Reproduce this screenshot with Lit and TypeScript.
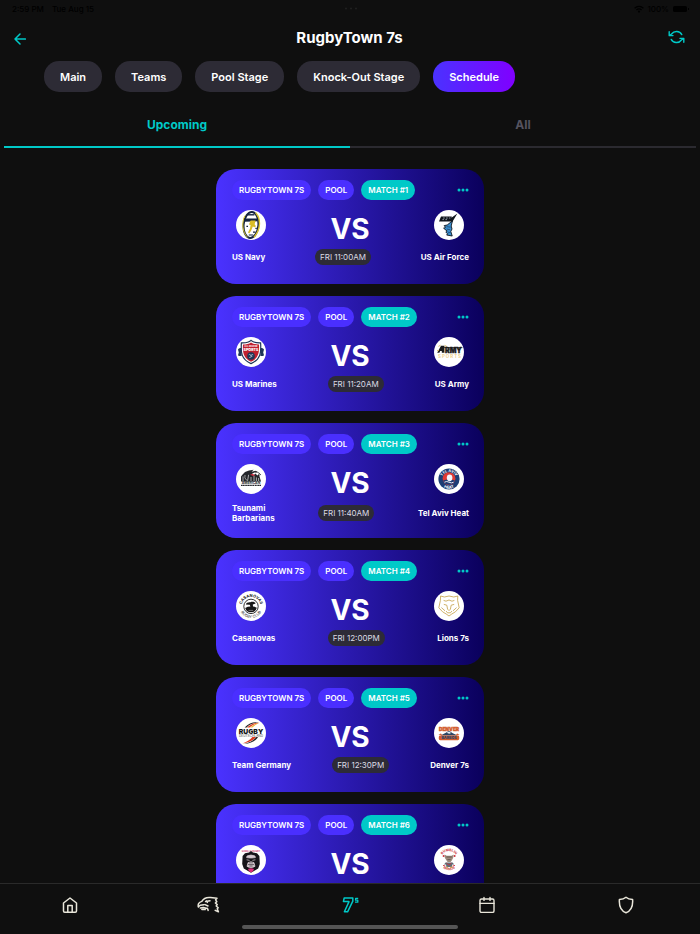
import { LitElement, html, css, svg } from "lit";
import type { TemplateResult } from "lit";
import { customElement, property, state } from "lit/decorators.js";
import { classMap } from "lit/directives/class-map.js";

interface Team {
  name: string[];
  logo: string;
}

interface Match {
  id: number;
  home: Team;
  away: Team;
  time: string;
}

const matches: Match[] = [
  { id: 1, home: { name: ["US Navy"], logo: "navy" }, away: { name: ["US Air Force"], logo: "airforce" }, time: "FRI 11:00AM" },
  { id: 2, home: { name: ["US Marines"], logo: "marines" }, away: { name: ["US Army"], logo: "army" }, time: "FRI 11:20AM" },
  { id: 3, home: { name: ["Tsunami", "Barbarians"], logo: "tsunami" }, away: { name: ["Tel Aviv Heat"], logo: "telaviv" }, time: "FRI 11:40AM" },
  { id: 4, home: { name: ["Casanovas"], logo: "casanovas" }, away: { name: ["Lions 7s"], logo: "lions" }, time: "FRI 12:00PM" },
  { id: 5, home: { name: ["Team Germany"], logo: "germany" }, away: { name: ["Denver 7s"], logo: "denver" }, time: "FRI 12:30PM" },
  { id: 6, home: { name: [], logo: "gorilla" }, away: { name: [], logo: "rhinos" }, time: "" },
];

/* Team crests, each drawn on a 30 x 30 white disc. */
const logos: Record<string, TemplateResult> = {
  navy: svg`
    <ellipse cx="15" cy="15" rx="7.4" ry="13" fill="none" stroke="#14233f" stroke-width="2" transform="rotate(5 15 15)"/>
    <path d="M19.600 2.800c5.200 5.600 5.600 16-1.600 24.400" fill="none" stroke="#d9c530" stroke-width="1.4"/>
    <path d="M11.600 27.400C6.200 22.400 5.400 12 9 5.600" fill="none" stroke="#d9c530" stroke-width="1"/>
    <path d="M8.400 8.600h13.800l-.8 2.600-5 .4-8 .2z" fill="#14233f"/>
    <path d="M11.400 4.800h7" stroke="#14233f" stroke-width="1.4"/>
    <path d="M14.600 10.600h5l-1 3.600 1.400 2-1.400 1-1.800-.8-1.600 4-2 3-1.200-.8 2-4 .6-3.600-1.600-.6z" fill="#d9bd28"/>
    <path d="M10.400 16.400h1.600M19.400 18.400h1.400M17 22.200h2.400M12.800 25h4.400" stroke="#14233f" stroke-width="1.200"/>`,
  airforce: svg`
    <path d="M7 6.400h10.800l-.4 1.400 6-4.400-5.400 9-1.800 1.600L17 11.400H5z" fill="#10151c"/>
    <path d="M9 8h1.800M12 8h1.800M15 8h1.400M8.400 9.600h1.600M11.400 9.600H13" stroke="#b9c3cd" stroke-width=".7"/>
    <path d="M16.200 12.600l2.200-1.600-1.200 5 .8 3-1.200 2.400 1.400 4.600-5.600-1 1.200-1.200-2-1.600 1.400-1-3.600-3 2-.8-1.400-1.800 3-.6z" fill="#3a8fd0" stroke="#10151c" stroke-width=".9"/>
    <path d="M12.600 16.600l4 .6M12.600 19l3.600.8M14 22.200l2.400.4" stroke="#16314f" stroke-width=".6"/>`,
  marines: svg`
    <path d="M2 12.400c.6-1 2-1.400 3.600-1.400v8c-1.600 0-3 0-3.600-.8l.8-2.800zM28 12.400c-.6-1-2-1.400-3.600-1.400v8c1.600 0 3 0 3.600-.8l-.8-2.800z" fill="#1d3557"/>
    <path d="M15 3.400c2 1.800 5.400 2.600 9.600 2.400.6 9.400.4 16.400-9.600 20.800C5 22.200 4.800 15.200 5.400 5.800 9.600 6 13 5.200 15 3.400z" fill="#fff" stroke="#1d3557" stroke-width="1.2"/>
    <path d="M15 5.400c2 1.400 4.600 2 8 2 .4 8-.2 13.600-8 17.400-7.800-3.800-8.400-9.400-8-17.400 3.400 0 6-.6 8-2z" fill="#c0202f"/>
    <text x="15" y="10.200" class="crest" font-size="2.200" fill="#fff">ALL MARINE</text>
    <text x="15" y="13.800" class="crest heavy" font-size="3.600" fill="#fff">SPORTS</text>
    <circle cx="15" cy="19" r="3.800" fill="#1d3557"/>
    <path d="M12.800 17.800c1-.8 2-.2 2.200 1 .4-1.400 1.400-1.600 2.200-1M13.400 20.600l3-1.400" stroke="#cfd6df" stroke-width=".8" fill="none"/>`,
  army: svg`
    <path d="M3.200 15.800L7 8.800h3.400v7H7.800V14H6.200l-.8 1.800z" fill="#1a1a1a"/>
    <path d="M4.400 9.400l2.200-1.200M10.600 8.400l2.400 1.200M3 13.600h2" stroke="#d9b75f" stroke-width=".9"/>
    <text x="19.400" y="15.800" class="crest heavy" font-size="7" fill="#1a1a1a" stroke="#1a1a1a" stroke-width=".4">RMY</text>
    <path d="M10 10.600h18.400" stroke="#1a1a1a" stroke-width=".8"/>
    <text x="15.500" y="21" class="crest" font-size="4.400" fill="#f0d28a">S P O R T S</text>`,
  tsunami: svg`
    <path d="M5 17.400v-5l1.600-1.800L9 8l4-1.600 4.600-.6-2 2 4-1 1.600 2-2.800-.4-2.600 1.600 1.600 1.400 2-2 2 2 1.400-1.400 2.200 7.400z" fill="#24262a"/>
    <path d="M7 12.400v4.600M9 11v3l2 2.600M12.600 10.800l-1 6M15 13v4M18 12v5M20.400 13.400v4M22.600 14v3.400" stroke="#fff" stroke-width=".6"/>
    <path d="M14 10.600l3-.6 2.400 1.600-3 .2z" fill="#d8283a"/>
    <path d="M20 7.200l4 2.600M22.400 11.400l2.600-1" stroke="#24262a" stroke-width=".8"/>
    <text x="15" y="20.200" class="crest" font-size="3.400" fill="#24262a">AMERICAN</text>
    <path d="M5 21.400h20" stroke="#24262a" stroke-width="1.300" stroke-dasharray="1.400 .3"/>`,
  telaviv: svg`
    <circle cx="15" cy="15" r="10.600" fill="#1c3d75"/>
    <circle cx="15" cy="14.600" r="6.400" fill="#e03a35"/>
    <path d="M9 16.600a6.400 6.400 0 0 0 12 0q-6-2-12 0z" fill="#1c3d75"/>
    <ellipse cx="15.600" cy="13.800" rx="2.800" ry="3.400" fill="#f2f5fb"/>
    <path d="M10.400 18.200q2.200-1.400 4.600 0t4.600 0" fill="none" stroke="#fff" stroke-width=".9"/>
    <path id="ta-top" d="M7.800 15a7.200 7.200 0 0 1 14.400 0" fill="none"/>
    <path id="ta-low" d="M5.400 17a9.800 9.800 0 0 0 19.200 0" fill="none"/>
    <text class="crest" font-size="3.700" fill="#fff"><textPath href="#ta-top" startOffset="50%">TEL AVIV</textPath></text>
    <text class="crest" font-size="4" fill="#fff"><textPath href="#ta-low" startOffset="50%">HEAT</textPath></text>`,
  casanovas: svg`
    <circle cx="15" cy="15.400" r="7.200" fill="#fff" stroke="#1b1b1b" stroke-width=".9"/>
    <path d="M9.800 13.600c.4-2 2.400-2.600 4.600-2.400 2-.8 4.800-.2 5.200 1.200l-2.800 1.200.2 2q2.800.2 3.800 1.200a6 6 0 0 1-11.600.2q2.600-1.400 5.200-1.400l-.6-1.800z" fill="#161616"/>
    <path d="M12.600 19.400h4.600" stroke="#999" stroke-width=".7"/>
    <path id="ca-top" d="M5.600 15.400a9.400 9.400 0 0 1 18.800 0" fill="none"/>
    <path id="ca-low" d="M3.400 15.400a11.600 11.600 0 0 0 23.200 0" fill="none"/>
    <text class="crest" font-size="4" fill="#1b1b1b"><textPath href="#ca-top" startOffset="50%">CASANOVAS</textPath></text>
    <text class="crest light" font-size="3.800" fill="#1b1b1b"><textPath href="#ca-low" startOffset="50%">RUGBY CLUB</textPath></text>`,
  lions: svg`
    <g fill="none" stroke="#c49f45" stroke-width=".8" stroke-linejoin="round">
      <path d="M6.600 5l3.800 1L15 5l4.800 1 4-1-.2 4.400 1.600 7.400-3.800 4-3.600 2.200-2.800 2-2.800-2-3.600-2.200-3.800-4 1.600-7.400z"/>
      <path d="M9.600 9.400l2.400.8 3-1.200 3 1.200 2.400-.8M9.800 13.400l3 .8.800 4L15 19.600l1.400-1.400.8-4 3-.8M12 20l1.600 1.800h2.800L18 20M7.400 16.600l3.600 3.200M22.600 16.600L19 19.800"/>
    </g>`,
  germany: svg`
    <path d="M8.600 9.400C12.600 5 18 3.600 22.600 4.400 17 5 13 6.600 10.600 9.400z" fill="#222"/>
    <path d="M11 9.400c4-3.400 8.400-4.800 12.400-4.600-4.400 1.200-8 2.800-9.800 4.800z" fill="#df3b20"/>
    <path d="M14 9.400c3-2.400 5.800-4 9-4.400-3 1.600-5.200 3-6.600 4.600z" fill="#efb43c"/>
    <path d="M6.400 25.400c5.400-.4 10.600-2.800 13.800-6.400h-3.800C14.200 22 10.600 24.200 6.400 25.400z" fill="#df3b20"/>
    <path d="M8 25.800c6 .2 11.600-2.600 14-6.800h-1.600c-3.400 3.800-7.600 6-12.400 6.800z" fill="#222"/>
    <text x="15" y="16" class="crest heavy" font-size="6.800" fill="#151515">RUGBY</text>
    <text x="15" y="19.400" class="crest light" font-size="3.200" fill="#444">DEUTSCHLAND</text>`,
  denver: svg`
    <text x="15" y="12.600" class="crest heavy" font-size="4.800" fill="#d25b2c" stroke="#d25b2c" stroke-width=".4">DENVER</text>
    <path d="M6.400 17.600l5-2.600 3.600-2.200 3.800 2.400 4.800 2.400z" fill="#2d4563"/>
    <path d="M12.600 14.800l2.400-1.400 2.200 1.600-2 .8z" fill="#e9eef5"/>
    <path d="M7 15.600l-2.600 1 4 1M23 15.600l2.600 1-4 1" fill="#d25b2c"/>
    <rect x="4.800" y="17.600" width="20.400" height="4.600" rx="1.400" fill="#d25b2c"/>
    <text x="15" y="21.200" class="crest heavy" font-size="3.600" fill="#33496a">BARBOS</text>`,
  gorilla: svg`
    <text x="15" y="6.800" class="crest" font-size="2.300" fill="#d43b77">GORILLA RUGBY</text>
    <path d="M15 6l2 1.600 4 .6 2.400 2.800.4 8-1.600 4.600L18 26l-3 1.800-3-1.800-4.200-2.400L6.200 19l.4-8L9 8.200l4-.6z" fill="#161418"/>
    <path d="M11 11q4-2 8 0l.4 1.600-3.400.4h-2l-3.400-.4zM10.600 14.800l3 .6M16.400 15.400l3-.6M12 17.600q3-1.600 6 0l1 3.800q-4 2.400-8 0z" fill="#d5c9cf" stroke="#d5c9cf" stroke-width=".7"/>
    <path d="M12 19.600h6M14 17v1.600M16 17v1.600M13.400 21h3.200" stroke="#161418" stroke-width=".6"/>
    <path d="M12 24q3-1.400 6 0l-1 2.200-2 1.400-2-1.400z" fill="#d92b78"/>`,
  rhinos: svg`
    <path id="rh-top" d="M7.600 11a8 8 0 0 1 14.800 0" fill="none"/>
    <path id="rh-low" d="M6.400 20.400a10.200 10.200 0 0 0 17.200 0" fill="none"/>
    <text class="crest" font-size="3.400" fill="#c9333c"><textPath href="#rh-top" startOffset="50%">BUMBLIN</textPath></text>
    <text class="crest" font-size="3.300" fill="#c9333c"><textPath href="#rh-low" startOffset="50%">RHINOS</textPath></text>
    <path d="M10.600 9.600l2 1.200h5l2-1.200-.4 3.200-1.400 2.600-1.200 1.600h-3L12.200 15l-1.400-2.200z" fill="#9c8a7c"/>
    <path d="M12.400 12h5.400M13.400 14.600h3.200" stroke="#5a4e48" stroke-width=".8"/>
    <path d="M11.600 17.400h7l1.600 2-2 .2-.4 2.400h-5.400l-.4-2.400-2-.2z" fill="#5f6c76"/>
    <path d="M12.600 18l2.400 2 2.400-2M9 20.400l2.400.6M21 20.400l-2.400.6" stroke="#c9333c" stroke-width=".9" fill="none"/>
    <circle cx="9.600" cy="11" r="1" fill="#c9333c"/><circle cx="20.600" cy="11" r="1" fill="#c9333c"/>
    <circle cx="13" cy="22.400" r=".8" fill="#d8a23c"/><circle cx="17" cy="22.400" r=".8" fill="#d8a23c"/>`,
};

@customElement("match-card")
export class MatchCard extends LitElement {
  @property({ attribute: false }) match!: Match;

  static styles = css`
    :host { display: block; }
    .card {
      box-sizing: border-box;
      min-height: 115px;
      padding: 11px 15px 14px 16px;
      border-radius: 20px;
      background: linear-gradient(90deg, #4a32ff, #0a005c);
      color: #fff;
      font-size: 8px;
      line-height: 10px;
      font-weight: 700;
    }
    .tags { display: flex; align-items: center; gap: 7px; }
    .tag {
      padding: 5px 7px;
      border-radius: 10px;
      background: #4a2fff;
      font-weight: 600;
      white-space: nowrap;
    }
    .number { background: #00c9c8; }
    .more {
      margin-left: auto;
      padding: 4px 0;
      border: 0;
      background: none;
      display: flex;
      cursor: pointer;
    }
    .versus {
      display: flex;
      align-items: center;
      justify-content: space-between;
      margin-top: 10px;
      padding: 0 5px 0 4px;
      height: 30px;
    }
    .logo { display: block; width: 30px; height: 30px; }
    .vs { font-size: 28px; line-height: 30px; padding-top: 8px; }
    .teams {
      display: flex;
      align-items: center;
      justify-content: space-between;
      margin-top: 9px;
    }
    .away { text-align: right; }
    .line { display: block; white-space: nowrap; }
    .time {
      padding: 3px 5px;
      border-radius: 8px;
      background: #2d2b37;
      color: #dcdbe4;
      font-weight: 400;
      white-space: nowrap;
    }
    .crest { font-family: Inter, "Liberation Sans", sans-serif; font-weight: 700; text-anchor: middle; }
    .heavy { font-weight: 900; }
    .light { font-weight: 400; }
  `;

  private logo(team: Team) {
    return html`<svg class="logo" viewBox="0 0 30 30" role="img" aria-label=${team.name.join(" ") || team.logo}>
      <circle cx="15" cy="15" r="15" fill="#fff"/>${logos[team.logo]}
    </svg>`;
  }

  private teams({ home, away, time }: Match) {
    return html`
      <div class="teams">
        <span>${home.name.map((n) => html`<span class="line">${n}</span>`)}</span>
        <span class="time">${time}</span>
        <span class="away">${away.name.map((n) => html`<span class="line">${n}</span>`)}</span>
      </div>
    `;
  }

  render() {
    const { id, home, away, time } = this.match;
    return html`
      <article class="card">
        <div class="tags">
          <span class="tag">RUGBYTOWN 7S</span>
          <span class="tag">POOL</span>
          <span class="tag number">MATCH #${id}</span>
          <button class="more" aria-label="More options">
            <svg width="12" height="4" viewBox="0 0 12 4" fill="#00c9c8">
              <circle cx="2" cy="2" r="1.5"/><circle cx="6" cy="2" r="1.5"/><circle cx="10" cy="2" r="1.5"/>
            </svg>
          </button>
        </div>
        <div class="versus">
          ${this.logo(home)}<span class="vs">VS</span>${this.logo(away)}
        </div>
        ${time ? this.teams(this.match) : ""}
      </article>
    `;
  }
}

@customElement("app-root")
export class AppRoot extends LitElement {
  @state() private section = "Schedule";
  @state() private tab = "Upcoming";

  static styles = css`
    :host {
      display: flex;
      flex-direction: column;
      height: 100vh;
      overflow: hidden;
      background: #0f0f0f;
      color: #fff;
      font-family: Inter, "Liberation Sans", sans-serif;
    }
    button { font-family: inherit; border: 0; background: none; padding: 0; cursor: pointer; }
    svg { display: block; }
    .status {
      display: grid;
      grid-template-columns: 1fr auto 1fr;
      align-items: center;
      height: 17px;
      padding: 0 11px 0 12px;
      color: #000;
      font-size: 8px;
      font-weight: 500;
    }
    .clock { display: flex; gap: 8px; }
    .power { display: flex; gap: 3px; align-items: center; justify-content: flex-end; }
    .header {
      display: grid;
      grid-template-columns: 1fr auto 1fr;
      align-items: center;
      height: 44px;
      padding: 0 15px 0 14px;
    }
    .title { margin: 0; padding-bottom: 2px; font-size: 15px; line-height: 20px; font-weight: 700; }
    .back { justify-self: start; }
    .refresh { justify-self: end; padding-bottom: 4px; }
    .sections { display: flex; flex-wrap: wrap; gap: 13px; padding: 0 44px; }
    .section {
      height: 31px;
      padding: 0 16px;
      border-radius: 15px;
      background: #2d2b35;
      color: #fff;
      font-size: 11px;
      font-weight: 600;
    }
    .section.on { background: linear-gradient(90deg, #4a32ff, #8000ff); }
    .tabs { display: flex; margin: 10px 4px 0; flex: none; }
    .tab {
      flex: 1;
      height: 46px;
      border-bottom: 2px solid #2b2a30;
      color: #55535f;
      font-size: 12px;
      font-weight: 700;
    }
    .tab.on { color: #00c9c8; border-bottom-color: #00c9c8; }
    .list {
      flex: 1;
      min-height: 0;
      overflow-y: auto;
      scrollbar-width: none;
      display: flex;
      flex-direction: column;
      align-items: center;
      gap: 12px;
      padding: 21px 16px;
    }
    match-card { width: 100%; max-width: 268px; flex: none; }
    .bottom { flex: none; border-top: 1px solid #2a2a2a; padding-bottom: 5px; }
    .nav { display: flex; padding-right: 5px; height: 41px; }
    .link {
      flex: 1;
      display: flex;
      align-items: center;
      justify-content: center;
      color: #e9e6da;
    }
    .link.on { color: #00c9c8; }
    .handle { width: 216px; height: 4px; border-radius: 2px; background: #555; margin: 0 auto; }
  `;

  private navIcons = [
    {
      label: "Home",
      icon: svg`<svg width="16" height="16" viewBox="0 0 16 16" fill="none" stroke="currentColor" stroke-width="1.5" stroke-linejoin="round">
        <path d="M1.500 6L8 1l6.500 5v8q0 1.200-1.200 1.200H2.700q-1.200 0-1.200-1.200zM5.800 15V8.500h4.400V15"/></svg>`,
    },
    {
      label: "Eagles",
      icon: svg`<svg width="23" height="17" viewBox="0 0 23 17" fill="none" stroke="currentColor" stroke-width="1.5" stroke-linecap="round" stroke-linejoin="round">
        <path d="M1.400 10.800C.6 8 2 6.200 4.800 5.400 6.400 2.600 10 1.200 13.600 1.600L20 2.200l-1.400 1.600 1.200 1.800-1.400 1.400 1.800 1.600-1 1.400 2 1.800-1 1 1.200 3-3.200-1.400"/>
        <path d="M1.400 10.800l1.800-1.600 3.600-.4M3.400 12l3-.6 4 1M4.800 13.400l3.400.2M10.400 12.400l.8 2M8 8.600l3 1.400M8.600 5.600l4.400-.8M9.400 4.800l1 1.600"/></svg>`,
    },
    {
      label: "Sevens",
      icon: svg`<svg width="24" height="16" viewBox="-6 0 24 16" fill="none" stroke="currentColor" stroke-width="1.5" stroke-linejoin="round">
        <path d="M2.200 1h8.600v3.200L5.600 14.800H2.400L7 4.600H1.400z"/>
        <path d="M16.200 1.400h-2.600v1.800h2.200v2H13" stroke-width="1.300"/></svg>`,
    },
    {
      label: "Calendar",
      icon: svg`<svg width="16" height="18" viewBox="0 0 16 18" fill="none" stroke="currentColor" stroke-width="1.4" stroke-linecap="round">
        <rect x="1" y="3" width="14" height="13.400" rx="1.500"/><path d="M1 7.400h14M5 1.400v3M11 1.400v3"/></svg>`,
    },
    {
      label: "Badge",
      icon: svg`<svg width="16" height="18" viewBox="0 0 16 18" fill="none" stroke="currentColor" stroke-width="1.5" stroke-linejoin="round">
        <path d="M8 1.200C9.600 2.600 12 3.400 14.600 3.600 15 9 14 14.400 8 16.800 2 14.400 1 9 1.400 3.600 4 3.400 6.400 2.600 8 1.200z"/></svg>`,
    },
  ];

  render() {
    return html`
      <div class="status">
        <div class="clock"><span>2:59 PM</span><span>Tue Aug 15</span></div>
        <svg width="14" height="3" viewBox="0 0 14 3" fill="#222"><circle cx="2" cy="1.5" r="1"/><circle cx="7" cy="1.5" r="1"/><circle cx="12" cy="1.5" r="1"/></svg>
        <div class="power">
          <svg width="10" height="8" viewBox="0 0 10 8" fill="none" stroke="#000" stroke-width="1.3">
            <path d="M.6 3.200a6.200 6.200 0 0 1 8.800 0M2.400 5a3.700 3.700 0 0 1 5.200 0"/><circle cx="5" cy="6.600" r=".5"/></svg>
          <span>100%</span>
          <svg width="17" height="8" viewBox="0 0 17 8"><rect x="1" y="1" width="14" height="6" rx="1.6"/><rect x="16" y="3" width="1" height="2"/></svg>
        </div>
      </div>

      <header class="header">
        <button class="back" aria-label="Back">
          <svg width="12" height="12" viewBox="0 0 12 12" fill="none" stroke="#00c9c8" stroke-width="1.5" stroke-linecap="round" stroke-linejoin="round">
            <path d="M6 1L1 6l5 5M1 6h10.400"/></svg>
        </button>
        <h1 class="title">RugbyTown 7s</h1>
        <button class="refresh" aria-label="Refresh">
          <svg width="17" height="14" viewBox="0 0 17 14" fill="none" stroke="#00c9c8" stroke-width="1.4" stroke-linecap="round" stroke-linejoin="round">
            <path d="M3.600 4A6 6 0 0 1 13.800 4.600M1.200 1.800V5.600H5M1.200 5.600L3.600 4M13.400 10A6 6 0 0 1 3.200 9.400M15.800 12.200V8.400H12M15.800 8.400L13.400 10"/></svg>
        </button>
      </header>

      <nav class="sections" aria-label="Sections">
        ${["Main", "Teams", "Pool Stage", "Knock-Out Stage", "Schedule"].map(
          (name) => html`<button
            class=${classMap({ section: true, on: name === this.section })}
            @click=${() => (this.section = name)}
          >${name}</button>`
        )}
      </nav>

      <div class="tabs" role="tablist">
        ${["Upcoming", "All"].map(
          (name) => html`<button
            role="tab"
            aria-selected=${name === this.tab ? "true" : "false"}
            class=${classMap({ tab: true, on: name === this.tab })}
            @click=${() => (this.tab = name)}
          >${name}</button>`
        )}
      </div>

      <main class="list">
        ${matches.map((m) => html`<match-card .match=${m}></match-card>`)}
      </main>

      <footer class="bottom">
        <nav class="nav" aria-label="Main">
          ${this.navIcons.map(
            ({ label, icon }) => html`<a href="#" aria-label=${label}
              class=${classMap({ link: true, on: label === "Sevens" })}>${icon}</a>`
          )}
        </nav>
        <div class="handle"></div>
      </footer>
    `;
  }
}
